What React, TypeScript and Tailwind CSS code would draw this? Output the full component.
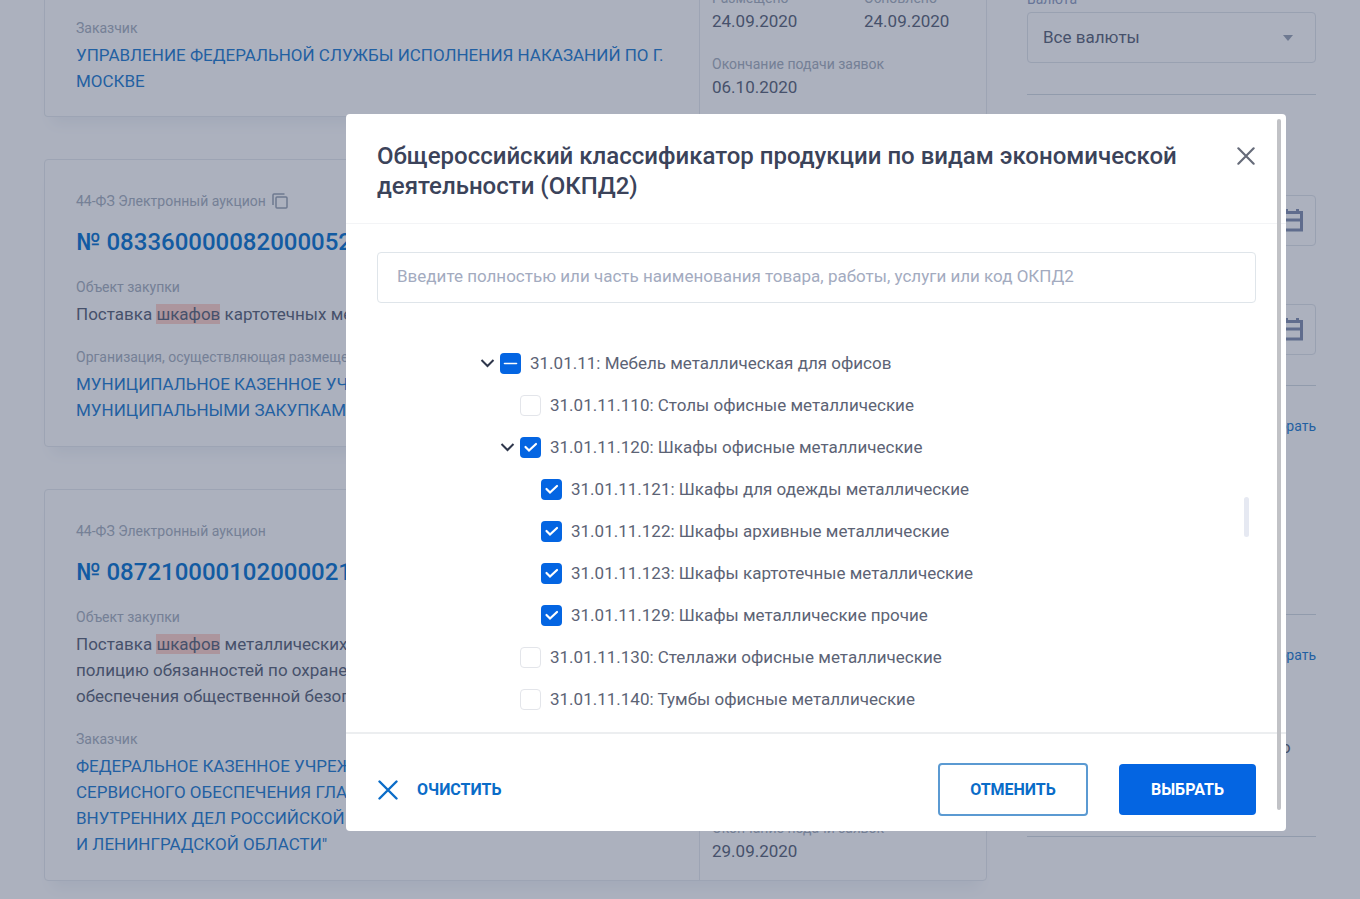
import { useState } from 'react';
import type { ReactNode } from 'react';
import { clsx } from 'clsx';

interface TreeItem {
  code: string;
  title: string;
  level: number;
  state: 'on' | 'off' | 'mixed';
  open?: boolean;
}

const tree: TreeItem[] = [
  { code: '31.01.11', title: 'Мебель металлическая для офисов', level: 0, state: 'mixed', open: true },
  { code: '31.01.11.110', title: 'Столы офисные металлические', level: 1, state: 'off' },
  { code: '31.01.11.120', title: 'Шкафы офисные металлические', level: 1, state: 'on', open: true },
  { code: '31.01.11.121', title: 'Шкафы для одежды металлические', level: 2, state: 'on' },
  { code: '31.01.11.122', title: 'Шкафы архивные металлические', level: 2, state: 'on' },
  { code: '31.01.11.123', title: 'Шкафы картотечные металлические', level: 2, state: 'on' },
  { code: '31.01.11.129', title: 'Шкафы металлические прочие', level: 2, state: 'on' },
  { code: '31.01.11.130', title: 'Стеллажи офисные металлические', level: 1, state: 'off' },
  { code: '31.01.11.140', title: 'Тумбы офисные металлические', level: 1, state: 'off' },
];

const indent = ['pl-[134px]', 'pl-[154px]', 'pl-[175px]'];

const Label = ({ children }: { children: ReactNode }) => (
  <p className="text-sm leading-5 text-[#a3adbc]">{children}</p>
);

const Field = ({ label, children }: { label: string; children: ReactNode }) => (
  <div className="mt-5">
    <Label>{label}</Label>
    <div className="mt-1 text-[17px] leading-[26px] text-[#566075]">{children}</div>
  </div>
);

const Mark = ({ children }: { children: ReactNode }) => (
  <mark className="bg-[#ffd0c8] text-inherit">{children}</mark>
);

const DateItem = ({ label, value }: { label: string; value: string }) => (
  <div className="w-[152px] shrink-0 whitespace-nowrap">
    <Label>{label}</Label>
    <p className="text-[17px] leading-[26px] text-[#566075]">{value}</p>
  </div>
);

const CopyIcon = () => (
  <svg className="h-4 w-4" viewBox="0 0 16 16" fill="none" stroke="currentColor" strokeWidth="1.5">
    <rect x="4" y="4" width="11" height="11" rx="1" />
    <path d="M1 12V2a1 1 0 0 1 1-1h10.5" />
  </svg>
);

const CloseIcon = ({ className }: { className: string }) => (
  <svg className={className} viewBox="0 0 20 20" fill="none" stroke="currentColor" strokeLinecap="round">
    <path d="M1.5 1.5l17 17M18.5 1.5l-17 17" />
  </svg>
);

const CalendarIcon = () => (
  <svg className="h-6 w-6" viewBox="0 0 24 24" fill="none" stroke="#7f8dae" strokeWidth="3">
    <path d="M2.5 3.5h19v17.5h-19zM2.5 11h19M6.5 3.5V0M17.5 3.5V0" />
  </svg>
);

interface LotCardProps {
  number: string;
  copy?: boolean;
  ends: string;
  children: ReactNode;
}

const Dates = ({ ends }: { ends: string }) => (
  <div className="flex w-[287px] shrink-0 flex-col justify-end gap-5 border-l border-[#e6eaee] pb-4 pl-3">
    <div className="flex">
      <DateItem label="Размещено" value="24.09.2020" />
      <DateItem label="Обновлено" value="24.09.2020" />
    </div>
    <DateItem label="Окончание подачи заявок" value={ends} />
  </div>
);

const LotCard = ({ number, copy, ends, children }: LotCardProps) => (
  <article className="flex rounded-sm border border-[#e6eaee] shadow-[0_14px_14px_-8px_#eff2f6]">
    <div className="min-w-0 flex-1 pt-[31px] pr-8 pb-[23px] pl-[31px]">
      <div className="flex items-center gap-1.5 text-[#98a2b2]">
        <Label>44-ФЗ Электронный аукцион</Label>
        {copy && (
          <button type="button" aria-label="Скопировать">
            <CopyIcon />
          </button>
        )}
      </div>
      <a href="#" className="mt-4 block text-2xl leading-[30px] font-medium text-[#0070d0]">
        № {number}
      </a>
      {children}
    </div>
    <Dates ends={ends} />
  </article>
);

const DateInput = ({ id, label }: { id: string; label: string }) => (
  <div>
    <label htmlFor={id} className="block text-sm leading-5 text-[#a3adbc]">
      {label}
    </label>
    <div className="mt-1 flex h-[51px] items-center rounded-sm border border-[#dfe4ea] pr-[11px]">
      <input id={id} type="text" className="min-w-0 flex-1 px-4 outline-none" />
      <CalendarIcon />
    </div>
  </div>
);

const Filters = () => (
  <aside className="w-[289px] shrink-0 pt-px">
    <label htmlFor="currency" className="block text-sm leading-5 text-[#8c9bc0]">
      Валюта
    </label>
    <div className="relative mt-[3px]">
      <select
        id="currency"
        className="h-[51px] w-full appearance-none rounded-sm border border-[#dfe4ea] px-[15px] text-[17px] text-[#566075]"
      >
        <option>Все валюты</option>
      </select>
      <svg className="pointer-events-none absolute top-[23px] right-[23px] h-1.5 w-2.5" viewBox="0 0 10 6" fill="#98a2b5">
        <path d="M0 0h10L5 6z" />
      </svg>
    </div>
    <hr className="mt-[31px] border-[#d3dae2]" />

    <div className="mt-[76px] flex flex-col gap-[34px]">
      <DateInput id="date-from" label="С" />
      <DateInput id="date-to" label="По" />
    </div>

    <hr className="mt-[30px] border-[#d3dae2]" />
    <div className="mt-[30px] flex h-[198px] justify-end">
      <a href="#" className="text-sm leading-5 text-[#1879d0]">
        Выбрать
      </a>
    </div>
    <hr className="border-[#d3dae2]" />
    <div className="mt-[30px] flex h-[92px] justify-end">
      <a href="#" className="text-sm leading-5 text-[#1879d0]">
        Выбрать
      </a>
    </div>
    <p className="h-[99px] pl-[109px] text-[17px] leading-5 text-[#566075]">Ничего не выбрано</p>
    <hr className="border-[#d3dae2]" />
  </aside>
);

const Checkbox = ({ id, state }: { id: string; state: TreeItem['state'] }) => {
  const [value, setValue] = useState(state);
  return (
    <span className="grid h-[21px] w-[21px] shrink-0">
      <input
        id={id}
        type="checkbox"
        checked={value === 'on'}
        onChange={() => setValue(value === 'on' ? 'off' : 'on')}
        className={clsx(
          'col-start-1 row-start-1 h-full w-full appearance-none rounded-sm',
          value === 'off' ? 'border border-[#e3e5ea] bg-white' : 'bg-[#0465e2]',
        )}
      />
      {value !== 'off' && (
        <svg
          className="pointer-events-none col-start-1 row-start-1"
          viewBox="0 0 21 21"
          fill="none"
          stroke="white"
          strokeWidth={value === 'on' ? 2.2 : 1.6}
          strokeLinecap="round"
        >
          <path d={value === 'on' ? 'M5.5 10l3.5 3.5L16 7' : 'M4.5 10.5h12'} />
        </svg>
      )}
    </span>
  );
};

const TreeRow = ({ item }: { item: TreeItem }) => (
  <li className={clsx('flex h-[42px] items-center', indent[item.level])}>
    {item.open ? (
      <button type="button" aria-label="Свернуть" className="mr-[5px] w-[15px] text-[#2f374c]">
        <svg className="h-[9px] w-[15px]" viewBox="0 0 15 9" fill="none" stroke="currentColor" strokeWidth="2">
          <path d="M1.5 1l6 6 6-6" />
        </svg>
      </button>
    ) : (
      <span className="w-5" />
    )}
    <Checkbox id={item.code} state={item.state} />
    <label htmlFor={item.code} className="pl-[9px] text-[17px] leading-6 text-[#5c6375]">
      {item.code}: {item.title}
    </label>
  </li>
);

const ClassifierDialog = () => (
  <section
    role="dialog"
    aria-labelledby="dialog-title"
    className="relative w-[940px] max-w-full rounded-sm bg-white"
  >
    <header className="flex items-start justify-between border-b border-[#f3f4f6] pt-[27px] pr-[31px] pb-[22px] pl-[31px]">
      <h1 id="dialog-title" className="max-w-[820px] text-2xl leading-[30px] font-medium text-[#3b435a]">
        Общероссийский классификатор продукции по видам экономической деятельности (ОКПД2)
      </h1>
      <button type="button" aria-label="Закрыть" className="mt-1.5 text-[#666b79]">
        <CloseIcon className="h-[18px] w-[18px] stroke-[2.4px]" />
      </button>
    </header>

    <div className="pt-7 pr-[30px] pb-[11px] pl-[31px]">
      <input
        type="text"
        aria-label="Поиск по классификатору"
        placeholder="Введите полностью или часть наименования товара, работы, услуги или код ОКПД2"
        className="h-[51px] w-full rounded-sm border border-[#dfe5ea] px-[19px] pb-[3px] text-[17px] outline-none placeholder:text-[#a3abbf]"
      />
    </div>
    <ul className="relative mt-7 pb-3">
      {tree.map((item) => (
        <TreeRow key={item.code} item={item} />
      ))}
      <li aria-hidden="true" className="absolute top-[155px] right-[37px] h-10 w-[5px] rounded-sm bg-[#e6e9f2]" />
    </ul>

    <footer className="flex items-center border-t-2 border-[#eceef0] pt-[29px] pr-[30px] pb-[15px] pl-8 font-bold">
      <button type="button" className="flex items-center gap-[19px] text-[#0a6cc8]">
        <CloseIcon className="h-5 w-5 stroke-[2.4px]" />
        ОЧИСТИТЬ
      </button>
      <button type="button" className="ml-auto h-[53px] w-[150px] rounded border-2 border-[#5b9ad2] text-[#0a6cc8]">
        ОТМЕНИТЬ
      </button>
      <button type="button" className="ml-[31px] h-[51px] w-[137px] rounded bg-[#0465e2] text-white">
        ВЫБРАТЬ
      </button>
    </footer>

    <span className="absolute top-[5px] right-[5px] bottom-[21px] w-1 rounded-sm bg-[#c1c2c6]" />
  </section>
);

export default function App() {
  return (
    <div className="h-screen overflow-hidden bg-white font-[Roboto,sans-serif]">
      <div className="-mt-3 flex gap-10 px-11">
        <main className="flex min-w-0 flex-1 flex-col gap-[42px]">
          <article className="flex rounded-b-sm border border-t-0 border-[#e6eaee] shadow-[0_14px_14px_-8px_#eff2f6]">
            <div className="min-w-0 flex-1 pt-2.5 pr-8 pb-[22px] pl-[31px]">
              <Field label="Заказчик">
                <a href="#" className="text-[#1879d0]">
                  УПРАВЛЕНИЕ ФЕДЕРАЛЬНОЙ СЛУЖБЫ ИСПОЛНЕНИЯ НАКАЗАНИЙ ПО Г. МОСКВЕ
                </a>
              </Field>
            </div>
            <Dates ends="06.10.2020" />
          </article>

          <LotCard number="083360000082000052" copy ends="02.10.2020">
            <Field label="Объект закупки">
              Поставка <Mark>шкафов</Mark> картотечных ме
            </Field>
            <Field label="Организация, осуществляющая размещение">
              <a href="#" className="text-[#1879d0]">
                МУНИЦИПАЛЬНОЕ КАЗЕННОЕ УЧР
                <br />
                МУНИЦИПАЛЬНЫМИ ЗАКУПКАМИ
              </a>
            </Field>
          </LotCard>

          <LotCard number="087210000102000021" ends="29.09.2020">
            <Field label="Объект закупки">
              Поставка <Mark>шкафов</Mark> металлических
              <br />
              полицию обязанностей по охране
              <br />
              обеспечения общественной безоп
            </Field>
            <Field label="Заказчик">
              <a href="#" className="text-[#1879d0]">
                ФЕДЕРАЛЬНОЕ КАЗЕННОЕ УЧРЕЖ
                <br />
                СЕРВИСНОГО ОБЕСПЕЧЕНИЯ ГЛАВ
                <br />
                ВНУТРЕННИХ ДЕЛ РОССИЙСКОЙ Ф
                <br />И ЛЕНИНГРАДСКОЙ ОБЛАСТИ"
              </a>
            </Field>
          </LotCard>
        </main>
        <Filters />
      </div>

      <div className="fixed inset-0 flex items-start justify-end bg-[#2f3c5c]/40 pt-[114px] pr-[74px]">
        <ClassifierDialog />
      </div>
    </div>
  );
}
